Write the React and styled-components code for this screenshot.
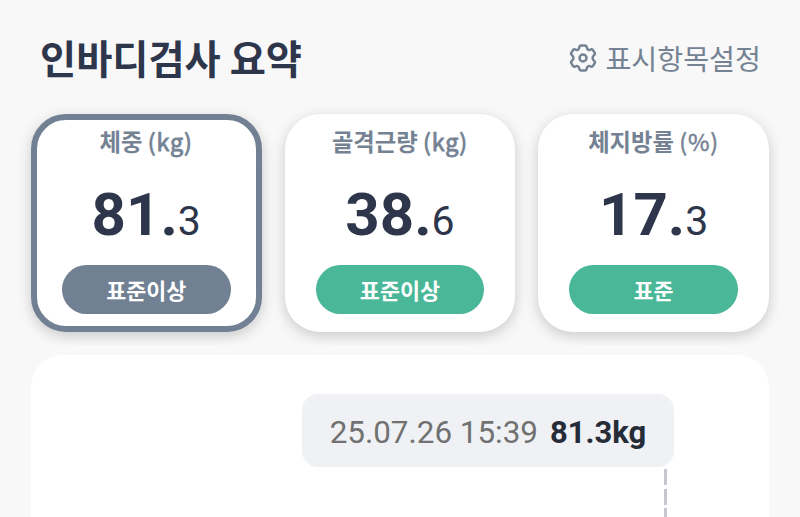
import React from "react";
import styled, { createGlobalStyle } from "styled-components";

const GlobalStyle = createGlobalStyle`
    * {
        box-sizing: border-box;
    }

    body {
        margin: 0;
        background: #f8f8f8;
        overflow: hidden;
    }
`;

const Page = styled.div`
    width: 800px;
    height: 517px;
    overflow: hidden;
    background: #f8f8f8;
    font-family: "Noto Sans CJK KR", sans-serif;
`;

const Header = styled.header`
    display: flex;
    justify-content: space-between;
    align-items: center;
    height: 95px;
    padding: 22px 39px 0 40px;
`;

const Title = styled.h1`
    margin: 0;
    padding-bottom: 4px;
    font-size: 39.3px;
    line-height: 50px;
    font-weight: bold;
    color: #2e364b;
    white-space: nowrap;
`;

const SettingButton = styled.button`
    display: flex;
    align-items: center;
    gap: 8px;
    padding: 0;
    border: none;
    background: none;
    color: #748293;
    font-family: inherit;
    font-size: 28.2px;
    line-height: 40px;
    white-space: nowrap;
    cursor: pointer;

    svg {
        margin-top: -1px;
    }
`;

const SettingText = styled.span`
    padding-bottom: 1px;
`;

/* 카드 그림자는 이 영역 밖으로 나가지 않음 */
const CardList = styled.div`
    display: flex;
    gap: 23.2px;
    width: 780px;
    height: 250px;
    padding: 18.5px 0 0 31px;
    overflow: hidden;
`;

const Card = styled.div`
    display: flex;
    flex-direction: column;
    align-items: center;
    flex: none;
    width: 230.5px;
    height: 218.5px;
    padding-top: ${({ $active }) => ($active ? "5px" : "11px")};
    border: ${({ $active }) => ($active ? "6px solid #718093" : "none")};
    border-radius: 35px;
    background: #fff;
    box-shadow: 0 4px 14px rgba(0, 0, 0, 0.19);
`;

const Label = styled.div`
    font-size: 23.3px;
    line-height: 32px;
    font-weight: 700;
    color: #748293;
    white-space: nowrap;
`;

const Unit = styled.span`
    font-weight: 400;
    letter-spacing: 0.9px;
    -webkit-text-stroke: ${({ $stroke }) => $stroke}px currentColor;
`;

const Value = styled.div`
    margin-top: 23px;
    height: 70px;
    font-family: Roboto, sans-serif;
    font-size: 60px;
    line-height: 70px;
    font-weight: 700;
    color: #2e364b;
    white-space: nowrap;
`;

const Decimal = styled.span`
    font-size: 41px;
    font-weight: 400;
`;

const Badge = styled.div`
    width: 168.5px;
    height: 49px;
    margin-top: 15.5px;
    border-radius: 25px;
    background: ${({ $color }) => $color};
    color: #fff;
    font-size: 21.8px;
    line-height: 49px;
    font-weight: 700;
    text-align: center;
`;

const ChartPanel = styled.section`
    display: flex;
    flex-direction: column;
    width: 738px;
    height: 240px;
    margin: 10px 0 0 31px;
    padding: 39px 0 0 271px;
    border-radius: 32px;
    background: #fff;
`;

const Tooltip = styled.div`
    display: flex;
    align-items: center;
    justify-content: center;
    gap: 12px;
    width: 372px;
    height: 73px;
    padding-top: 3px;
    border-radius: 16px;
    background: #eff1f5;
    font-family: Roboto, sans-serif;
    font-size: 31.4px;
    white-space: nowrap;
`;

const DateText = styled.span`
    color: #717171;
`;

const WeightText = styled.span`
    font-size: 31px;
    font-weight: 700;
    color: #252c38;
`;

const GuideLine = styled.div`
    width: 3px;
    height: 60px;
    margin: 2px 0 0 362px;
    background: repeating-linear-gradient(
        to bottom,
        #c4c6d0 0 16px,
        transparent 16px 19.5px
    );
`;

const items = [
    { name: "체중", unit: "(kg)", whole: "81.", decimal: "3", status: "표준이상", color: "#718093", active: true },
    { name: "골격근량", unit: "(kg)", whole: "38.", decimal: "6", status: "표준이상", color: "#49b798" },
    { name: "체지방률", unit: "(%)", whole: "17.", decimal: "3", status: "표준", color: "#49b798" },
];

function GearIcon() {
    return (
        <svg width="28" height="30" viewBox="-14 -15 28 30" fill="none" stroke="currentColor" strokeWidth="2.5" strokeLinejoin="round">
            <path d="M-1.8-12.4H1.8Q3.4-12.4 3.7-10.6Q4-8.8 5.4-8.2Q6.4-7.8 7.8-8.5Q9.3-9.2 10.2-7.7L11.7-5.1Q12.4-3.8 11-2.8Q9.6-1.8 9.6 0Q9.6 1.8 11 2.8Q12.4 3.8 11.7 5.1L10.2 7.7Q9.3 9.2 7.8 8.5Q6.4 7.8 5.4 8.2Q4 8.8 3.7 10.6Q3.4 12.4 1.8 12.4H-1.8Q-3.4 12.4-3.7 10.6Q-4 8.8-5.4 8.2Q-6.4 7.8-7.8 8.5Q-9.3 9.2-10.2 7.7L-11.7 5.1Q-12.4 3.8-11 2.8Q-9.6 1.8-9.6 0Q-9.6-1.8-11-2.8Q-12.4-3.8-11.7-5.1L-10.2-7.7Q-9.3-9.2-7.8-8.5Q-6.4-7.8-5.4-8.2Q-4-8.8-3.7-10.6Q-3.4-12.4-1.8-12.4Z" />
            <circle r="3.5" />
        </svg>
    );
}

function App() {
    return (
        <Page>
            <GlobalStyle />
            <Header>
                <Title>인바디검사 요약</Title>
                <SettingButton>
                    <GearIcon />
                    <SettingText>표시항목설정</SettingText>
                </SettingButton>
            </Header>
            <CardList>
                {items.map((item) => (
                    <Card key={item.name} $active={item.active}>
                        <Label>
                            {item.name} <Unit $stroke={item.unit === "(%)" ? 0.5 : 0.8}>{item.unit}</Unit>
                        </Label>
                        <Value>
                            {item.whole}
                            <Decimal>{item.decimal}</Decimal>
                        </Value>
                        <Badge $color={item.color}>{item.status}</Badge>
                    </Card>
                ))}
            </CardList>
            <ChartPanel>
                <Tooltip>
                    <DateText>25.07.26 15:39</DateText>
                    <WeightText>81.3kg</WeightText>
                </Tooltip>
                <GuideLine />
            </ChartPanel>
        </Page>
    );
}

export default App;
